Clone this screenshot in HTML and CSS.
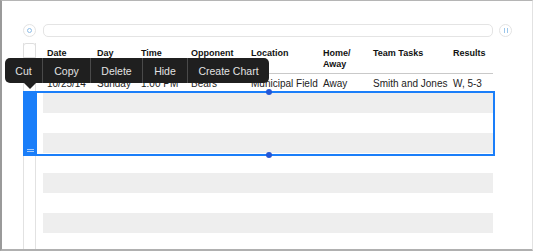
FILE: index.html
```html
<!DOCTYPE html>
<html lang="en">
<head>
	<meta charset="UTF-8">
	<title>Game Schedule</title>
	<link rel="stylesheet" href="styles.css">
</head>
<body>
	<div class="frame">
		<div class="toolbar">
			<span class="round-btn"><span class="ring"></span></span>
			<div class="search-bar"></div>
			<span class="round-btn pause"><span class="bar"></span><span class="bar"></span></span>
		</div>

		<div class="sheet">
			<div class="gutter">
				<div class="gutter-head"></div>
			</div>
			<div class="table">
				<div class="row head">
					<span>Date</span>
					<span>Day</span>
					<span>Time</span>
					<span>Opponent</span>
					<span>Location</span>
					<span>Home/<br>Away</span>
					<span>Team Tasks</span>
					<span>Results</span>
				</div>
				<div class="row data">
					<span>10/25/14</span>
					<span>Sunday</span>
					<span>1:00 PM</span>
					<span>Bears</span>
					<span>Municipal Field</span>
					<span>Away</span>
					<span>Smith and Jones</span>
					<span>W, 5-3</span>
				</div>
				<div class="row shade"></div>
				<div class="row"></div>
				<div class="row shade"></div>
				<div class="row"></div>
				<div class="row shade"></div>
				<div class="row"></div>
				<div class="row shade"></div>
				<div class="row"></div>
			</div>
		</div>

		<!-- selected row block -->
		<div class="selection">
			<div class="sel-bar"><span class="grip"></span></div>
			<span class="handle top"></span>
			<span class="handle bottom"></span>
		</div>

		<!-- popup menu -->
		<div class="menu">
			<span class="item w-cut">Cut</span>
			<span class="item w-copy">Copy</span>
			<span class="item w-delete">Delete</span>
			<span class="item w-hide">Hide</span>
			<span class="item w-chart">Create Chart</span>
		</div>
	</div>
</body>
</html>
```

FILE: styles.css
```css
*{
	margin: 0;
	padding: 0;
	box-sizing: border-box;
	font-family: "Liberation Sans", Arial, sans-serif;
}

body{
	background: white;
	width: 535px;
	height: 251px;
	overflow: hidden;
}

.frame{
	position: relative;
	width: 533px;
	height: 251px;
	border-left: 2px solid #9a9a9a;
	border-top: 1px solid #b5b5b5;
	border-bottom: 2px solid #b0b0b0;
	border-right: 1px solid #e2e2e2;
	padding: 23px 0 0 21px;
	overflow: hidden;
}

/* top bar */
.toolbar{
	display: flex;
	align-items: center;
	height: 13px;
}

.round-btn{
	width: 13px;
	height: 13px;
	border-radius: 50%;
	border: 1px solid #e3e3e3;
	display: flex;
	align-items: center;
	justify-content: center;
	gap: 2px;
}
.ring{
	width: 5px;
	height: 5px;
	border-radius: 50%;
	border: 1px solid #8fbde6;
}
.pause{
	margin-left: 6px;
}
.bar{
	width: 1px;
	height: 5px;
	background: #9cc6ea;
}

.search-bar{
	margin-left: 7px;
	width: 450px;
	height: 13px;
	border: 1px solid #e4e4e4;
	border-radius: 5px;
}

/* sheet */
.sheet{
	display: flex;
	margin-top: 6px;
}

.gutter{
	width: 13px;
	height: 210px;
	border-left: 1px solid #e2e2e2;
	border-right: 1px solid #e2e2e2;
}
.gutter-head{
	height: 15px;
	margin: 0 -1px;
	border: 1px solid #dedede;
	border-radius: 3px 3px 0 0;
}

.table{
	margin-left: 7px;
	width: 450px;
}

.row{
	display: grid;
	grid-template-columns: 50px 44px 50px 60px 72px 50px 80px 44px;
	height: 20px;
	font-size: 10px;
	line-height: 11px;
	color: #111;
}
.row span{
	padding-left: 4px;
	white-space: nowrap;
}

.head{
	height: 31px;
	padding-top: 5px;
	font-size: 9px;
	font-weight: bold;
	border-bottom: 1px solid #c9c9c9;
}
.data{
	height: 19px;
	align-items: center;
	color: #222;
}
.shade{
	background: #eeeeee;
}

/* selection */
.selection{
	position: absolute;
	left: 21px;
	top: 90px;
	width: 472px;
	height: 65px;
	border: 2px solid #1a7ef9;
}
.sel-bar{
	position: absolute;
	left: -1px;
	top: -1px;
	width: 13px;
	height: 62px;
	background: #1a7ef9;
}
.grip{
	position: absolute;
	left: 3px;
	bottom: 2px;
	width: 7px;
	height: 3px;
	border-top: 1px solid #a9cdfb;
	border-bottom: 1px solid #a9cdfb;
}
.handle{
	position: absolute;
	left: 241px;
	width: 6px;
	height: 6px;
	border-radius: 50%;
	background: #2457d6;
}
.handle.top{
	top: -4px;
}
.handle.bottom{
	bottom: -4px;
}

/* popup menu */
.menu{
	position: absolute;
	left: 3px;
	top: 57px;
	display: flex;
	height: 25px;
	background: #1f1f1f;
	border-radius: 5px;
}
.menu::after{
	content: "";
	position: absolute;
	left: 19px;
	top: 25px;
	border-left: 6px solid transparent;
	border-right: 6px solid transparent;
	border-top: 6px solid #1f1f1f;
}
.item{
	display: flex;
	align-items: center;
	justify-content: center;
	color: #e2e2e2;
	font-size: 10.5px;
	border-right: 1px solid #4a4a4a;
}
.item:last-child{
	border-right: none;
}
.w-cut{ width: 38px; }
.w-copy{ width: 48px; }
.w-delete{ width: 52px; }
.w-hide{ width: 45px; }
.w-chart{ width: 81px; }
```
